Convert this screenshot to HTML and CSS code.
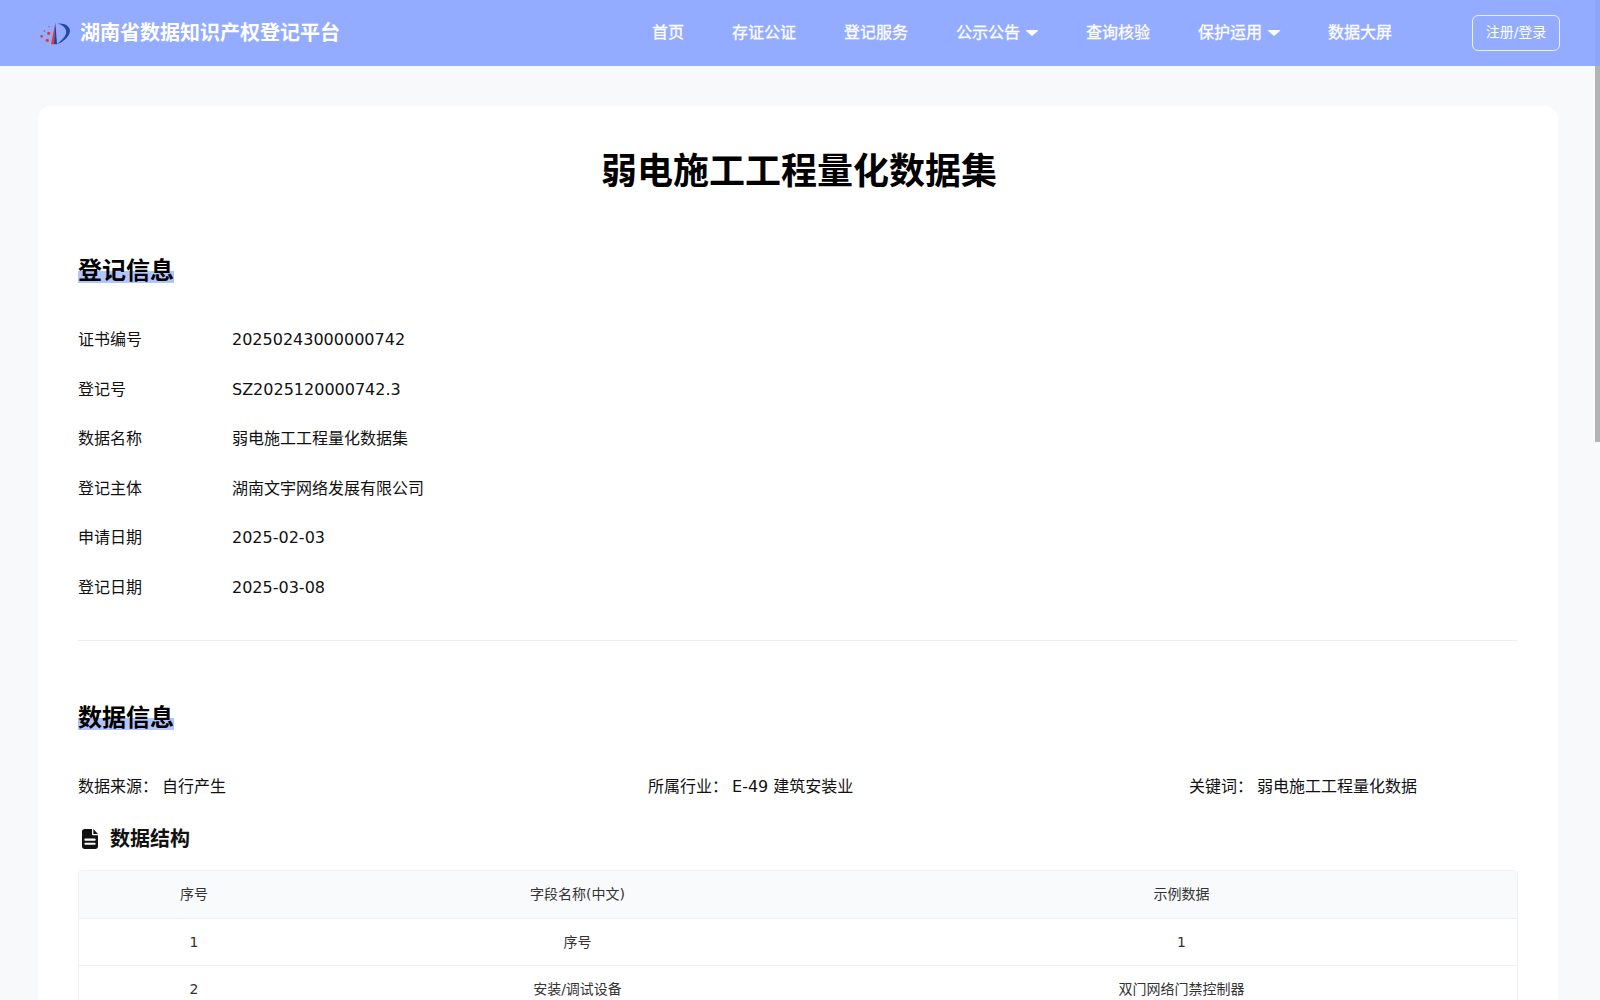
FILE: index.html
```html
<!DOCTYPE html>
<html lang="zh-CN">
<head>
  <meta charset="UTF-8">
  <title>弱电施工工程量化数据集</title>
  <link rel="stylesheet" href="styles.css">
</head>
<body>
  <div class="scroll-thumb"></div>
  <header class="navbar">
    <div class="brand">
      <svg class="brand-logo" viewBox="30 30 96 72">
        <path d="M76 35L63 100H72Z" fill="#e23a2e"/>
        <path d="M76 35L72 100H81Z" fill="#1f3f9c"/>
        <path d="M84 38C110 36 126 52 118 68C110 84 96 94 80 100C92 90 104 80 108 68C112 54 100 42 84 38Z" fill="#2546a8"/>
        <g fill="#e23a2e">
          <circle cx="57" cy="47" r="2"/>
          <circle cx="43" cy="60" r="2.5"/>
          <circle cx="56" cy="67" r="5"/>
          <circle cx="35" cy="76" r="4"/>
          <circle cx="52" cy="88" r="5"/>
        </g>
      </svg>
      <span class="brand-name">湖南省数据知识产权登记平台</span>
    </div>
    <nav class="nav-links">
      <a class="nav-link">首页</a>
      <a class="nav-link">存证公证</a>
      <a class="nav-link">登记服务</a>
      <a class="nav-link">公示公告<i class="caret"></i></a>
      <a class="nav-link">查询核验</a>
      <a class="nav-link">保护运用<i class="caret"></i></a>
      <a class="nav-link">数据大屏</a>
    </nav>
    <button class="login-btn">注册/登录</button>
  </header>

  <main class="detail-card">
    <h1 class="detail-title">弱电施工工程量化数据集</h1>

    <section class="register-info">
      <h2 class="section-title">登记信息</h2>
      <div class="info-list">
        <div class="info-row"><span class="info-label">证书编号</span><span>20250243000000742</span></div>
        <div class="info-row"><span class="info-label">登记号</span><span>SZ2025120000742.3</span></div>
        <div class="info-row"><span class="info-label">数据名称</span><span>弱电施工工程量化数据集</span></div>
        <div class="info-row"><span class="info-label">登记主体</span><span>湖南文宇网络发展有限公司</span></div>
        <div class="info-row"><span class="info-label">申请日期</span><span>2025-02-03</span></div>
        <div class="info-row"><span class="info-label">登记日期</span><span>2025-03-08</span></div>
      </div>
    </section>

    <section class="data-info">
      <h2 class="section-title">数据信息</h2>
      <div class="meta-grid">
        <div class="meta-item"><span>数据来源：</span><span>自行产生</span></div>
        <div class="meta-item"><span>所属行业：</span><span>E-49 建筑安装业</span></div>
        <div class="meta-item"><span>关键词：</span><span>弱电施工工程量化数据</span></div>
      </div>

      <h3 class="sub-title">
        <svg class="file-icon" viewBox="0 0 384 512" preserveAspectRatio="none">
          <path d="M64 0C29 0 0 29 0 64V448c0 35 29 64 64 64H320c35 0 64-29 64-64V160H272c-18 0-32-14-32-32V0H64zM272 0V128H384L272 0zM84 244H300c15 0 28 13 28 28s-13 28-28 28H84c-15 0-28-13-28-28s13-28 28-28zm0 106H300c15 0 28 13 28 28s-13 28-28 28H84c-15 0-28-13-28-28s13-28 28-28z"/>
        </svg>
        数据结构
      </h3>

      <div class="table-wrap">
        <table class="field-table">
          <colgroup>
            <col class="col-no">
            <col class="col-name">
            <col>
          </colgroup>
          <thead>
            <tr><th>序号</th><th>字段名称(中文)</th><th>示例数据</th></tr>
          </thead>
          <tbody>
            <tr><td>1</td><td>序号</td><td>1</td></tr>
            <tr><td>2</td><td>安装/调试设备</td><td>双门网络门禁控制器</td></tr>
          </tbody>
        </table>
      </div>
    </section>
  </main>
</body>
</html>
```

FILE: styles.css
```css
/* page */
html, body {
  height: 100%;
  margin: 0;
  overflow: hidden;
}

body {
  position: relative;
  background-color: #f8f9fa;
  color: #111;
  font-family: "DejaVu Sans", "Noto Sans CJK SC", sans-serif;
  font-size: 16px;
  font-kerning: none;
}

.scroll-thumb {
  position: absolute;
  top: 0;
  right: 0;
  width: 5px;
  height: 442px;
  background-color: #b4b4b4;
}

/* top bar */
.navbar {
  position: relative;
  z-index: 1;
  display: flex;
  align-items: center;
  height: 66px;
  padding: 0 40px;
  background-color: rgba(136, 163, 255, 0.9);
  color: #fff;
  line-height: 24px;
}

.brand {
  display: flex;
  align-items: center;
  gap: 8px;
  margin-right: auto;
}

.brand-logo {
  width: 32px;
  height: 24px;
}

.brand-name {
  font-size: 20px;
  font-weight: 700;
  margin-top: -1px;
}

.nav-links {
  display: flex;
  gap: 48px;
  margin-right: 80px;
}

.nav-link {
  display: flex;
  align-items: center;
  -webkit-text-stroke: 0.3px #fff;
}

.caret {
  width: 0;
  height: 0;
  margin: 0 -1px 0 5px;
  border-top: 6px solid #fff;
  border-left: 7px solid transparent;
  border-right: 7px solid transparent;
  border-radius: 2px;
}

.login-btn {
  width: 88px;
  height: 36px;
  padding: 0 0 5px;
  border: 1px solid rgba(255, 255, 255, 0.8);
  border-radius: 6px;
  background: none;
  color: #fff;
  font-family: inherit;
  font-size: 14px;
}

/* card */
.detail-card {
  margin: 40px 42px 0 38px;
  padding: 40px;
  background-color: #fff;
  border-radius: 12px;
}

.detail-title {
  margin: 0 0 61px;
  padding-left: 2px;
  font-size: 36px;
  line-height: 52px;
  font-weight: 700;
  text-align: center;
  color: #000;
}

.section-title {
  display: table;
  margin: 0;
  font-size: 24px;
  line-height: 24px;
  font-weight: 700;
  color: #000;
  background: linear-gradient(transparent 50%, #b3c5f8 50%);
}

/* registration rows */
.register-info {
  padding-bottom: 27.5px;
  border-bottom: 1px solid #eee;
}

.info-list {
  margin-top: 32.5px;
}

.info-row {
  display: flex;
  align-items: center;
  height: 49.5px;
  line-height: 24px;
}

.info-label {
  width: 154px;
}

/* data section */
.data-info {
  padding-top: 65px;
}

.meta-grid {
  display: grid;
  grid-template-columns: 570px 541px 1fr;
  margin-top: 45px;
  line-height: 24px;
}

.meta-item {
  display: flex;
  gap: 4px;
}

.sub-title {
  display: flex;
  align-items: center;
  gap: 12px;
  margin: 26px 0 17px 4px;
  font-size: 20px;
  line-height: 28px;
  font-weight: 700;
}

.file-icon {
  width: 16px;
  height: 20px;
  fill: #111;
}

/* table */
.table-wrap {
  border: 1px solid #eef0f3;
  border-radius: 4px;
  overflow: hidden;
}

.field-table {
  width: 100%;
  border-collapse: collapse;
  table-layout: fixed;
  font-size: 14px;
  line-height: 20px;
  color: #333;
}

.col-no {
  width: 230px;
}

.col-name {
  width: 537px;
}

.field-table th {
  height: 45px;
  padding: 0 0 2px;
  font-weight: 400;
  background-color: #f9fafc;
  border-bottom: 1px solid #eef0f3;
}

.field-table td {
  height: 46px;
  padding: 0;
  text-align: center;
  border-bottom: 1px solid #eef0f3;
}
```
